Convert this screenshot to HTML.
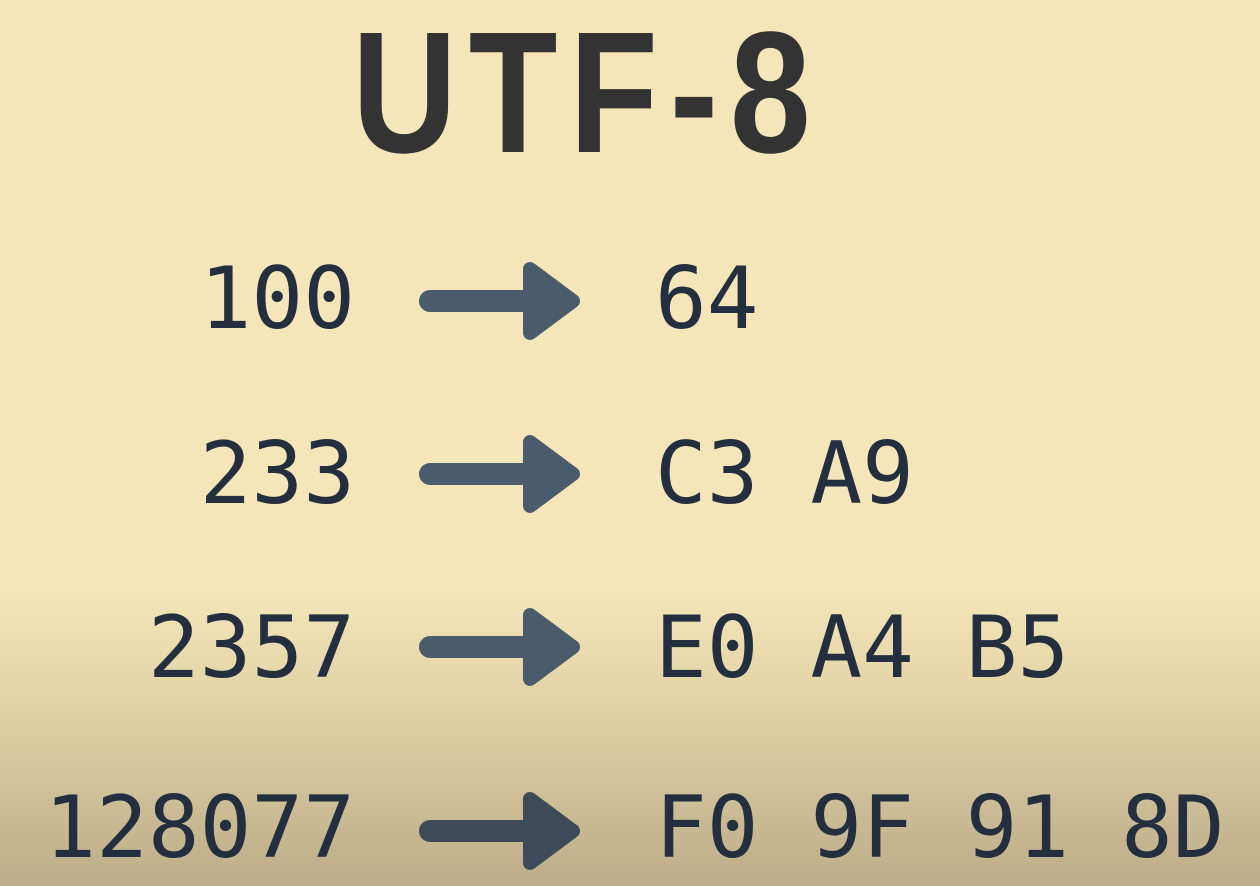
<!DOCTYPE html>
<html><head><meta charset="utf-8"><style>
html,body{margin:0;padding:0;width:1260px;height:886px;overflow:hidden}
body{background:linear-gradient(to bottom,#f4e6b8 0px,#f4e6b8 590px,#e2d3a6 700px,#c9ba94 820px,#bdad88 886px)}
svg{display:block}
.m{font-family:"DejaVu Sans Mono","Liberation Mono",monospace;font-size:86px;fill:#232f3f}
</style></head><body>
<svg width="1260" height="886" viewBox="0 0 1260 886">
<text x="0" y="152" transform="translate(352 0) scale(0.84 1)" letter-spacing="14" font-family="Liberation Sans, sans-serif" font-weight="bold" font-size="173" fill="#333333">UTF-8</text>
<defs>
<g id="a">
<line x1="430" y1="0" x2="530" y2="0" stroke-width="22" stroke-linecap="round"/>
<path d="M530 -32 L573 0 L530 32 Z" stroke-width="14" stroke-linejoin="round"/>
</g>
</defs>
<g fill="#4a5b6c" stroke="#4a5b6c">
<use href="#a" y="301"/>
<use href="#a" y="474"/>
<use href="#a" y="647"/>
</g>
<g fill="#3c4a5a" stroke="#3c4a5a"><use href="#a" y="831"/></g>
<text class="m" x="355" y="328" text-anchor="end">100</text>
<text class="m" x="655" y="328">64</text>
<text class="m" x="355" y="503" text-anchor="end">233</text>
<text class="m" x="655" y="503">C3 A9</text>
<text class="m" x="355" y="677" text-anchor="end">2357</text>
<text class="m" x="655" y="677">E0 A4 B5</text>
<text class="m" x="355" y="857" text-anchor="end">128077</text>
<text class="m" x="655" y="857">F0 9F 91 8D</text>
</svg>
</body></html>
